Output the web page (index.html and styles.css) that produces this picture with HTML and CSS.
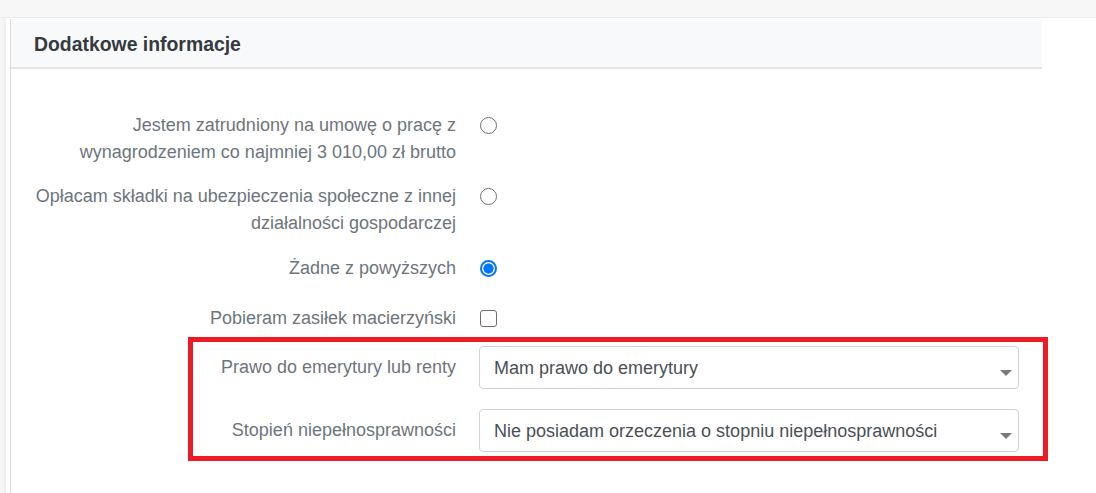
FILE: index.html
```html
<!DOCTYPE html>
<html lang="pl">
<head>
<meta charset="utf-8">
<title>Dodatkowe informacje</title>
<link rel="stylesheet" href="styles.css">
</head>
<body>
<div class="topbar"></div>
<div class="main">
  <div class="side"></div>
  <div class="gap"></div>
  <section class="card">
    <header class="card-header"><h2 class="title">Dodatkowe informacje</h2></header>
    <div class="card-body">
      <div class="row row-a">
        <label class="label">Jestem zatrudniony na umowę o pracę z wynagrodzeniem co najmniej 3 010,00 zł brutto</label>
        <div class="control"><input type="radio" name="inf" class="radio"></div>
      </div>
      <div class="row row-b">
        <label class="label">Opłacam składki na ubezpieczenia społeczne z innej działalności gospodarczej</label>
        <div class="control"><input type="radio" name="inf" class="radio"></div>
      </div>
      <div class="row row-c">
        <label class="label">Żadne z powyższych</label>
        <div class="control"><input type="radio" name="inf" class="radio" checked></div>
      </div>
      <div class="row row-d">
        <label class="label">Pobieram zasiłek macierzyński</label>
        <div class="control"><input type="checkbox" class="check"></div>
      </div>
      <div class="selects">
        <div class="highlight"></div>
        <div class="row row-sel">
          <label class="label">Prawo do emerytury lub renty</label>
          <div class="control select-wrap">
            <select class="select"><option>Mam prawo do emerytury</option></select>
          </div>
        </div>
        <div class="row row-sel">
          <label class="label">Stopień niepełnosprawności</label>
          <div class="control select-wrap">
            <select class="select"><option>Nie posiadam orzeczenia o stopniu niepełnosprawności</option></select>
          </div>
        </div>
      </div>
    </div>
  </section>
</div>
</body>
</html>
```

FILE: styles.css
```css
* { box-sizing: border-box; }
html, body { margin: 0; padding: 0; }
body {
  background: #fff;
  font-family: "Liberation Sans", Arial, sans-serif;
  width: 1096px;
  height: 493px;
  overflow: hidden;
}
.topbar {
  height: 18px;
  background: #f7f7f7;
  border-bottom: 1px solid #ececec;
}
.main {
  display: flex;
  height: 475px;
  padding-top: 1px;
}
.side {
  width: 6px;
  background: linear-gradient(to right, #f7f7f7, #efefef);
  margin-top: -1px;
}
.gap { width: 4px; }
.card {
  width: 1032px;
  border-left: 1px solid #dcdcdc;
  background: #fff;
}
.card-header {
  height: 50px;
  background: #f8f9fb;
  border-bottom: 2px solid #e2e4e7;
  display: flex;
  align-items: center;
  padding: 0 23px;
}
.title {
  margin: 0;
  font-size: 19.4px;
  font-weight: bold;
  color: #343a40;
  padding-top: 3px;
}
.card-body {
  padding: 43px 23px 0 17px;
}
.row {
  display: flex;
  align-items: flex-start;
  gap: 23px;
}
.label {
  width: 428px;
  text-align: right;
  font-size: 18px;
  line-height: 27px;
  color: #6c757d;
}
.control {
  width: 540px;
  display: flex;
}
.row-a { margin-bottom: 17px; }
.row-b { margin-bottom: 18px; }
.row-c { margin-bottom: 23px; }
.row-d { margin-bottom: 14px; }
.radio, .check {
  -webkit-appearance: none;
  appearance: none;
  margin: 5px 0 0 1px;
  width: 17px;
  height: 17px;
  border: 1.5px solid #6e6e6e;
  background: #fff;
}
.radio { border-radius: 50%; }
.radio:checked {
  border: 2px solid #0075ff;
  background: radial-gradient(circle, #0075ff 0 4.8px, #fff 5.4px);
}
.check { border-radius: 3px; }
.selects { position: relative; }
.row-sel { align-items: center; }
.row-sel + .row-sel { margin-top: 20px; }
.select-wrap { position: relative; }
.select-wrap::after {
  content: "";
  position: absolute;
  right: 7px;
  top: 24px;
  border-left: 6px solid transparent;
  border-right: 6px solid transparent;
  border-top: 6px solid #7a7a7a;
}
.select {
  -webkit-appearance: none;
  appearance: none;
  width: 540px;
  height: 43px;
  border: 1px solid #ced4da;
  border-radius: 4px;
  background: #fff;
  padding: 0 14px;
  font-family: "Liberation Sans", Arial, sans-serif;
  font-size: 18px;
  color: #495057;
}
.highlight {
  position: absolute;
  top: -9px;
  bottom: -9px;
  left: 160px;
  right: -29px;
  border: 5px solid #ed1c24;
  pointer-events: none;
}
```
